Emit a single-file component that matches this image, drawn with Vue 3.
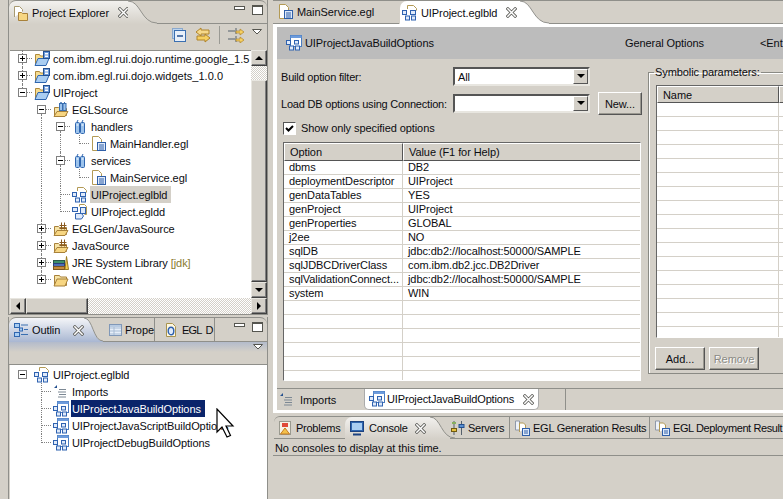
<script setup>
const tree = [
  { cells: ['plus up down'], icon: 'project', label: 'com.ibm.egl.rui.dojo.runtime.google_1.5', wide: true },
  { cells: ['plus up down'], icon: 'project', label: 'com.ibm.egl.rui.dojo.widgets_1.0.0', wide: true },
  { cells: ['minus up'], icon: 'project', label: 'UIProject' },
  { cells: ['', 'minus down'], icon: 'eglsource', label: 'EGLSource' },
  { cells: ['', 'v', 'minus down'], icon: 'pkg', label: 'handlers' },
  { cells: ['', 'v', 'v', 'elbow'], icon: 'egl', label: 'MainHandler.egl' },
  { cells: ['', 'v', 'minus up down'], icon: 'pkg', label: 'services' },
  { cells: ['', 'v', 'v', 'elbow'], icon: 'egl', label: 'MainService.egl' },
  { cells: ['', 'v', 'tee'], icon: 'bld', label: 'UIProject.eglbld', soft: true },
  { cells: ['', 'v', 'elbow'], icon: 'dd', label: 'UIProject.egldd' },
  { cells: ['', 'plus up down'], icon: 'srcfolder', label: 'EGLGen/JavaSource' },
  { cells: ['', 'plus up down'], icon: 'srcfolder', label: 'JavaSource' },
  { cells: ['', 'plus up down'], icon: 'jre', label: 'JRE System Library', note: '[jdk]' },
  { cells: ['', 'plus up'], icon: 'folder', label: 'WebContent' }
]

const outline = [
  { cells: ['minus'], icon: 'bld', label: 'UIProject.eglbld' },
  { cells: ['', 'tee'], icon: 'imports', label: 'Imports' },
  { cells: ['', 'tee'], icon: 'opt', label: 'UIProjectJavaBuildOptions', selected: true },
  { cells: ['', 'tee'], icon: 'opt', label: 'UIProjectJavaScriptBuildOptions' },
  { cells: ['', 'elbow'], icon: 'opt', label: 'UIProjectDebugBuildOptions' }
]

const options = [
  ['dbms', 'DB2'],
  ['deploymentDescriptor', 'UIProject'],
  ['genDataTables', 'YES'],
  ['genProject', 'UIProject'],
  ['genProperties', 'GLOBAL'],
  ['j2ee', 'NO'],
  ['sqlDB', 'jdbc:db2://localhost:50000/SAMPLE'],
  ['sqlJDBCDriverClass', 'com.ibm.db2.jcc.DB2Driver'],
  ['sqlValidationConnect...', 'jdbc:db2://localhost:50000/SAMPLE'],
  ['system', 'WIN'],
  ['', ''], ['', ''], ['', ''], ['', ''], ['', ''], ['', '']
]

const symbolRows = 17
const hasBox = c => c.includes('plus') || c.includes('minus')
</script>

<template>
  <div class="workbench">
    <!-- icon sprite -->
    <svg class="sprite" aria-hidden="true">
      <defs>
        <linearGradient id="greyFade" x1="0" y1="0" x2="0" y2="1">
          <stop offset="0" stop-color="#f2f1ee"/><stop offset="1" stop-color="#d4d0c8"/>
        </linearGradient>
        <linearGradient id="blueFade" x1="0" y1="0" x2="0" y2="1">
          <stop offset="0" stop-color="#f4f5f8"/><stop offset="1" stop-color="#a9b7d2"/>
        </linearGradient>
        <symbol id="i-project" viewBox="0 0 16 16">
          <path d="M1.500 3.500h4l1 1.500h4v8h-9z" fill="#f6dc90" stroke="#b08a3a"/>
          <path d="M1 14.500l3-7h11l-3 7z" fill="#a9cdf2" stroke="#2f66b0"/>
          <rect x="9.500" y="0.500" width="6" height="7" fill="#6d9bdc" stroke="#24508f"/>
          <rect x="11" y="2" width="3" height="1.500" fill="#fff"/>
          <rect x="11" y="4.500" width="3" height="1.500" fill="#fff"/>
        </symbol>
        <symbol id="i-eglsource" viewBox="0 0 16 16">
          <path d="M1.500 5.500h4l1 1h7v7h-12z" fill="#f6e3a6" stroke="#a8813a"/>
          <path d="M1 14.500l3-5h11l-3 5z" fill="#f7d682" stroke="#a8813a"/>
          <rect x="6.500" y="1.500" width="3" height="7" fill="#9cc3ec" stroke="#3a6fb0"/>
          <rect x="10" y="1.500" width="3" height="7" fill="#9cc3ec" stroke="#3a6fb0"/>
          <path d="M7 1l2 -1M11 1l1 -1" stroke="#3a6fb0"/>
        </symbol>
        <symbol id="i-srcfolder" viewBox="0 0 16 16">
          <path d="M1.500 5.500h4l1 1h7v7h-12z" fill="#f6e3a6" stroke="#a8813a"/>
          <path d="M1 14.500l3-5h11l-3 5z" fill="#f7d682" stroke="#a8813a"/>
          <path d="M8.500 1.500v7M11.500 1.500v7M6.500 4.500h7M6.500 7.500h7" stroke="#8a5a20" fill="none"/>
        </symbol>
        <symbol id="i-folder" viewBox="0 0 16 16">
          <path d="M1.500 3.500h5l1 1.500h6v8.500h-12z" fill="#f6e3a6" stroke="#a8813a"/>
          <path d="M1 14l3-7h11l-3 7z" fill="#f7d682" stroke="#a8813a"/>
        </symbol>
        <symbol id="i-pkg" viewBox="0 0 16 16">
          <rect x="3.500" y="3.500" width="4" height="11" rx="1" fill="#9cc3ec" stroke="#2f66b0"/>
          <rect x="8.500" y="3.500" width="4" height="11" rx="1" fill="#9cc3ec" stroke="#2f66b0"/>
          <path d="M4.500 6h2M9.500 6h2" stroke="#fff"/>
          <path d="M5 3l1 -2M10 3l1 -2" stroke="#2f66b0"/>
        </symbol>
        <symbol id="i-egl" viewBox="0 0 16 16">
          <path d="M6 14.500h-4.500v-14h6l3 3v3" fill="#fff" stroke="#b39a55"/>
          <rect x="6.500" y="6.500" width="8" height="8" fill="#dfeafa" stroke="#2f5fa8"/>
          <path d="M8 9h5M8 11h5M8 13h5" stroke="#2f5fa8"/>
        </symbol>
        <symbol id="i-bld" viewBox="0 0 16 16">
          <path d="M5.500 4v-3.500h6l3 3v2" fill="#fff" stroke="#b39a55"/>
          <rect x="0.500" y="5.500" width="4" height="4" fill="#dfeafa" stroke="#2f62b0"/>
          <rect x="8.500" y="5.500" width="5" height="4" fill="#dfeafa" stroke="#2f62b0"/>
          <rect x="3.500" y="11" width="4" height="4" fill="#dfeafa" stroke="#2f62b0"/>
          <rect x="9.500" y="11" width="4" height="4" fill="#dfeafa" stroke="#2f62b0"/>
        </symbol>
        <symbol id="i-dd" viewBox="0 0 16 16">
          <path d="M7.500 2.500v-2h5l2 2v8h-2" fill="#fff" stroke="#b39a55"/>
          <rect x="0.500" y="3.500" width="5" height="4" fill="#dfeafa" stroke="#2f62b0"/>
          <rect x="8.500" y="3.500" width="5" height="6" fill="#dfeafa" stroke="#2f62b0"/>
          <path d="M3.500 9.500h6l2 2.500-2 3h-6z" fill="#dfeafa" stroke="#2f62b0"/>
        </symbol>
        <symbol id="i-jre" viewBox="0 0 16 16">
          <rect x="0.500" y="5.500" width="11" height="3" fill="#3f8f6a" stroke="#2a5a48"/>
          <rect x="0.500" y="8.500" width="11" height="3" fill="#4f6fb8" stroke="#2a3f78"/>
          <rect x="0.500" y="11.500" width="11" height="3" fill="#c58a3a" stroke="#7a5520"/>
          <path d="M12 14.500l1.500-13 2 13z" fill="#f4cf50" stroke="#9a7a20"/>
        </symbol>
        <symbol id="i-opt" viewBox="0 0 16 16">
          <rect x="4.500" y="0.500" width="11" height="11" fill="#fff" stroke="#4a7cc0"/>
          <rect x="4.500" y="0.500" width="11" height="2.500" fill="#6d9bdc"/>
          <rect x="0.500" y="5.500" width="4" height="4" fill="#dfeafa" stroke="#2f62b0"/>
          <rect x="8.500" y="5.500" width="4" height="3.500" fill="#dfeafa" stroke="#2f62b0"/>
          <rect x="3.500" y="11" width="4" height="4" fill="#dfeafa" stroke="#2f62b0"/>
          <rect x="9.500" y="11" width="4" height="4" fill="#dfeafa" stroke="#2f62b0"/>
        </symbol>
        <symbol id="i-imports" viewBox="0 0 16 16">
          <path d="M1 4l3-3v3z" fill="#24508f"/>
          <path d="M6 5.500h7M5 8h8M6 10.500h7M5 13h8" stroke="#7c8894"/>
        </symbol>
        <symbol id="i-explorer" viewBox="0 0 16 16">
          <path d="M1.500 12v-10.500h5l3 3v2" fill="#fff" stroke="#a89a70"/>
          <path d="M5.500 7.500h3l1 1h5v7h-9z" fill="#f7d682" stroke="#a8813a"/>
        </symbol>
        <symbol id="i-outline" viewBox="0 0 16 16">
          <rect x="1.500" y="1.500" width="5" height="4" fill="#a9cdf2" stroke="#2f66b0"/>
          <rect x="1.500" y="10.500" width="5" height="4" fill="#a9cdf2" stroke="#2f66b0"/>
          <rect x="6.500" y="6" width="3" height="3" fill="#a9cdf2" stroke="#2f66b0"/>
          <path d="M8 3h7M11 7.500h4M8 12.500h7" stroke="#3a6fb0"/>
        </symbol>
        <symbol id="i-props" viewBox="0 0 16 16">
          <rect x="1.500" y="2.500" width="12" height="11" fill="#e6eef8" stroke="#8098b8"/>
          <path d="M2 6h11M2 9h11M2 12h11M6 3v10" stroke="#a8bcd4"/>
          <rect x="2" y="3" width="11" height="2" fill="#b8cbe2"/>
        </symbol>
        <symbol id="i-egld" viewBox="0 0 16 16">
          <path d="M3.500 14.500v-13h6l3 3v10z" fill="#fff8e0" stroke="#a8934e"/>
          <ellipse cx="8" cy="9" rx="2.800" ry="3.800" fill="#dfeafa" stroke="#2f62b0" stroke-width="1.400"/>
        </symbol>
        <symbol id="i-problems" viewBox="0 0 16 16">
          <rect x="2.500" y="1.500" width="11" height="13" fill="#f6f2e6" stroke="#9a9a90"/>
          <rect x="5" y="3" width="6" height="4" fill="#e04a3a"/>
          <path d="M3.500 14l4.500-6 4.500 6z" fill="#f3c04a" stroke="#c67a20"/>
        </symbol>
        <symbol id="i-console" viewBox="0 0 16 16">
          <rect x="1.500" y="1.500" width="13" height="10" fill="#2f66b0" stroke="#1c4280"/>
          <rect x="3" y="3" width="10" height="7" fill="#a9cdf2"/>
          <path d="M4 14.500h8" stroke="#1c4280" stroke-width="2"/>
        </symbol>
        <symbol id="i-servers" viewBox="0 0 16 16">
          <path d="M4 1v14M11.500 1v14" stroke="#55606c"/>
          <rect x="1.500" y="8.500" width="5" height="3" fill="#e6c040" stroke="#705a10"/>
          <rect x="9" y="4.500" width="5" height="3" fill="#5a8fd0" stroke="#24508f"/>
          <rect x="2" y="2" width="4" height="2" fill="#88b060"/>
        </symbol>
        <symbol id="i-results" viewBox="0 0 16 16">
          <path d="M1.500 10v-9h4v9z" fill="#eef2f8" stroke="#8f98a8"/>
          <path d="M5.500 12v-9h4l2 2v3" fill="#fff" stroke="#b39a55"/>
          <rect x="8.500" y="8.500" width="7" height="7" fill="#dfeafa" stroke="#2f5fa8"/>
          <path d="M10 11h4M10 13h4" stroke="#2f5fa8"/>
        </symbol>
        <symbol id="i-close" viewBox="0 0 12 12">
          <path d="M2 2l8 8M10 2l-8 8" stroke="#60605c" stroke-width="3.400" stroke-linecap="square" fill="none"/>
          <path d="M2 2l8 8M10 2l-8 8" stroke="#fff" stroke-width="1.600" stroke-linecap="square" fill="none"/>
        </symbol>
        <symbol id="i-menu" viewBox="0 0 10 6">
          <path d="M0.500 0.500h9l-4.500 4.500z" fill="#fff" stroke="#55554f"/>
        </symbol>
      </defs>
    </svg>

    <!-- left column -->
    <div class="left">
      <section class="view explorer">
        <div class="strip">
          <div class="tab on grey">
            <svg class="ic"><use href="#i-explorer"/></svg>
            <span>Project Explorer</span>
            <svg class="x"><use href="#i-close"/></svg>
          </div>
          <svg class="curve" viewBox="0 0 29 24" preserveAspectRatio="none">
            <path d="M0 0C13 0 13 23 29 23V24H0z" fill="url(#greyFade)"/>
            <path d="M0 0C13 0 13 23 29 23" fill="none" stroke="#8f8f8a"/>
          </svg>
          <div class="strip-fill">
            <i class="vb-min"></i>
            <i class="vb-max"></i>
          </div>
        </div>
        <div class="toolbar">
          <svg class="tool" viewBox="0 0 16 16">
            <rect x="1.500" y="1.500" width="10" height="10" fill="#bcd4ee" stroke="#8aa8cc"/>
            <rect x="3.500" y="3.500" width="11" height="11" fill="#e8f0fa" stroke="#3a6fb0"/>
            <path d="M6 9h6" stroke="#24508f" stroke-width="1.500"/>
          </svg>
          <svg class="tool" viewBox="0 0 16 16">
            <path d="M1 5l5-4v2h8v4H6v2z" fill="#f6d98a" stroke="#b0842a"/>
            <path d="M15 11l-5-4v2H2v4h8v2z" fill="#f6d060" stroke="#b0842a"/>
          </svg>
          <i class="tool-sep"></i>
          <svg class="tool" viewBox="0 0 16 16">
            <path d="M0 4h7M0 12h7M8 1v6M8 9v6" stroke="#55606c" fill="none"/>
            <path d="M8 4h4V2l4 3-4 3V6H8zM8 12h4v-2l4 3-4 3v-2H8z" fill="#f6d060" stroke="#b0842a" stroke-width="0.700"/>
          </svg>
          <svg class="menu"><use href="#i-menu"/></svg>
        </div>
        <div class="tree-frame">
          <div class="tree-v">
            <div class="tree">
              <div v-for="row in tree" :key="row.label" class="row">
                <span v-for="(c, i) in row.cells" :key="i" class="cell" :class="c">
                  <template v-if="hasBox(c)">
                    <b class="box" :class="c.includes('plus') ? 'p' : 'm'"></b>
                    <i class="stub"></i>
                  </template>
                </span>
                <svg class="ic"><use :href="'#i-' + row.icon"/></svg>
                <span class="name" :class="{ soft: row.soft, wide: row.wide }">{{ row.label }}<em v-if="row.note">{{ row.note }}</em></span>
              </div>
            </div>
            <div class="vbar">
              <div class="sb-btn up-b"><i></i></div>
              <div class="track small"></div>
              <div class="thumb"></div>
              <div class="sb-btn down-b"><i></i></div>
            </div>
          </div>
          <div class="hbar">
            <div class="sb-btn left-b"><i></i></div>
            <div class="thumb h"></div>
            <div class="track"></div>
            <div class="sb-btn right-b"><i></i></div>
          </div>
        </div>
      </section>

      <section class="view outline">
        <div class="strip tall">
          <div class="tab on blue">
            <svg class="ic"><use href="#i-outline"/></svg>
            <span>Outlin</span>
            <svg class="x wide"><use href="#i-close"/></svg>
          </div>
          <svg class="curve small" viewBox="0 0 19 25" preserveAspectRatio="none">
            <path d="M0 0C9 0 9 24 19 24V25H0z" fill="url(#blueFade)"/>
            <path d="M0 0C9 0 9 24 19 24" fill="none" stroke="#8f8f8a"/>
          </svg>
          <div class="tab off prope">
            <svg class="ic"><use href="#i-props"/></svg>
            <span>Prope</span>
          </div>
          <div class="tab off egld">
            <svg class="ic"><use href="#i-egld"/></svg>
            <span>EGL D</span>
          </div>
          <div class="strip-fill">
            <i class="vb-min"></i>
            <i class="vb-max"></i>
          </div>
        </div>
        <div class="toolbar short">
          <svg class="menu"><use href="#i-menu"/></svg>
        </div>
        <div class="tree outline-tree">
          <div v-for="row in outline" :key="row.label" class="row">
            <span v-for="(c, i) in row.cells" :key="i" class="cell" :class="c">
              <b v-if="c === 'minus'" class="box m"></b>
            </span>
            <svg class="ic"><use :href="'#i-' + row.icon"/></svg>
            <span class="name" :class="{ sel: row.selected }">{{ row.label }}</span>
          </div>
        </div>
      </section>
    </div>

    <!-- right column -->
    <div class="right">
      <section class="editor">
        <div class="strip">
          <div class="tab off main-tab">
            <svg class="ic"><use href="#i-egl"/></svg>
            <span>MainService.egl</span>
          </div>
          <div class="tab on white">
            <svg class="ic"><use href="#i-bld"/></svg>
            <span>UIProject.eglbld</span>
            <svg class="x"><use href="#i-close"/></svg>
          </div>
          <svg class="curve" viewBox="0 0 30 24" preserveAspectRatio="none">
            <path d="M0 0C13 0 13 23 30 23V24H0z" fill="#fff"/>
            <path d="M0 0C13 0 13 23 30 23" fill="none" stroke="#8f8f8a"/>
          </svg>
          <div class="strip-fill"></div>
        </div>
        <div class="editor-body">
          <div class="form-head">
            <svg class="ic"><use href="#i-opt"/></svg>
            <span class="form-title">UIProjectJavaBuildOptions</span>
            <span class="form-sub">General Options</span>
            <span class="form-ent">&lt;Ent</span>
          </div>
          <div class="form">
            <div class="form-left">
              <div class="field">
                <label>Build option filter:</label>
                <div class="combo"><span>All</span><i class="combo-btn"></i></div>
              </div>
              <div class="field second">
                <label>Load DB options using Connection:</label>
                <div class="combo"><span></span><i class="combo-btn"></i></div>
                <button class="btn new">New...</button>
              </div>
              <div class="check-row">
                <span class="check">
                  <svg viewBox="0 0 11 11"><path d="M2 5l2.500 2.500L9 3" fill="none" stroke="#000" stroke-width="2"/></svg>
                </span>
                <span>Show only specified options</span>
              </div>
              <div class="table opts">
                <div class="thead">
                  <span class="th c1">Option</span>
                  <span class="th c2">Value (F1 for Help)</span>
                </div>
                <div class="tbody">
                  <div v-for="(o, i) in options" :key="i" class="tr">
                    <span class="td c1">{{ o[0] }}</span>
                    <span class="td c2">{{ o[1] }}</span>
                  </div>
                </div>
              </div>
            </div>
            <fieldset class="group">
              <legend>Symbolic parameters:</legend>
              <div class="table syms">
                <div class="thead">
                  <span class="th s1">Name</span>
                  <span class="th s2"></span>
                </div>
                <div class="tbody">
                  <div v-for="n in symbolRows" :key="n" class="tr">
                    <span class="td s1"></span>
                    <span class="td s2"></span>
                  </div>
                </div>
              </div>
              <div class="group-btns">
                <button class="btn">Add...</button>
                <button class="btn disabled">Remove</button>
              </div>
            </fieldset>
          </div>
          <div class="page-tabs">
            <div class="ptab">
              <svg class="ic"><use href="#i-imports"/></svg>
              <span>Imports</span>
            </div>
            <div class="ptab on">
              <svg class="ic"><use href="#i-opt"/></svg>
              <span>UIProjectJavaBuildOptions</span>
              <svg class="x"><use href="#i-close"/></svg>
            </div>
            <div class="ptab-end"></div>
          </div>
        </div>
      </section>

      <section class="console">
        <div class="strip low">
          <div class="tab off problems">
            <svg class="ic"><use href="#i-problems"/></svg>
            <span>Problems</span>
          </div>
          <div class="tab on grey">
            <svg class="ic"><use href="#i-console"/></svg>
            <span>Console</span>
            <svg class="x"><use href="#i-close"/></svg>
          </div>
          <svg class="curve" viewBox="0 0 25 22" preserveAspectRatio="none">
            <path d="M0 0C11 0 11 21 25 21V22H0z" fill="url(#greyFade)"/>
            <path d="M0 0C11 0 11 21 25 21" fill="none" stroke="#8f8f8a"/>
          </svg>
          <div class="tab off servers">
            <svg class="ic"><use href="#i-servers"/></svg>
            <span>Servers</span>
          </div>
          <div class="tab off results">
            <svg class="ic"><use href="#i-results"/></svg>
            <span>EGL Generation Results</span>
          </div>
          <div class="tab off results last">
            <svg class="ic"><use href="#i-results"/></svg>
            <span>EGL Deployment Result</span>
          </div>
        </div>
        <div class="console-text">No consoles to display at this time.</div>
      </section>
    </div>

    <!-- mouse pointer -->
    <svg class="cursor" viewBox="0 0 19 31">
      <path d="M1 1v23l5-5 5 10 3.500-1.500L10 18h7z" fill="#fff" stroke="#000" stroke-width="1.200"/>
    </svg>
  </div>
</template>

<style>
html, body { margin: 0; background: #d4d0c8; }
</style>

<style scoped>
.workbench {
  position: relative;
  width: 783px;
  height: 499px;
  overflow: hidden;
  display: flex;
  background: #d4d0c8;
  color: #0c0c10;
  font: 11px/14px "Liberation Sans", Arial, sans-serif;
  letter-spacing: -0.08px;
}
.sprite { width: 0; height: 0; position: absolute; }
.ic { width: 16px; height: 16px; flex: none; }
.x { width: 11px; height: 11px; flex: none; margin-left: 6px; }
.x.wide { margin-left: 10px; }

/* ── Columns ── */
.left {
  width: 273px;
  flex: none;
  box-sizing: border-box;
  padding-left: 8px;
  padding-right: 5px;
  display: flex;
  flex-direction: column;
  gap: 2px;
}
.right {
  flex: 1;
  min-width: 0;
  display: flex;
  flex-direction: column;
}

/* ── Views ── */
.view {
  border-left: 1px solid #8f8f8a;
  border-right: 1px solid #8f8f8a;
  display: flex;
  flex-direction: column;
  min-height: 0;
}
.explorer { height: 314px; border-bottom: 1px solid #8f8f8a; flex: none; }
.outline { flex: 1; }

.strip {
  height: 24px;
  flex: none;
  display: flex;
  align-items: stretch;
  background: #d4d0c8;
  border-top: 1px solid #8f8f8a;
  box-sizing: border-box;
  border-top-left-radius: 7px;
  border-top-right-radius: 7px;
  overflow: hidden;
}
.strip.tall { height: 25px; }
.strip.low { height: 23px; letter-spacing: -0.25px; }
.strip-fill {
  flex: 1;
  min-width: 0;
  border-bottom: 1px solid #8f8f8a;
  display: flex;
  justify-content: flex-end;
  align-items: flex-start;
  gap: 7px;
  padding: 4px 4px 0 0;
}
.vb-min {
  width: 11px;
  height: 4px;
  box-sizing: border-box;
  background: #fff;
  border: 1px solid #55554f;
  flex: none;
  margin-top: 1px;
}
.vb-max {
  width: 11px;
  height: 10px;
  box-sizing: border-box;
  background: #fff;
  border: 1px solid #55554f;
  border-top-width: 2px;
  flex: none;
}

.tab {
  display: flex;
  align-items: center;
  gap: 3px;
  padding: 0 0 0 4px;
  flex: none;
  white-space: nowrap;
}
.tab.on { border-top-left-radius: 7px; }
.tab.grey { background: linear-gradient(#f2f1ee, #d4d0c8); }
.tab.blue { background: linear-gradient(#f4f5f8, #a9b7d2); }
.tab.white { background: #fff; }
.tab.off { border-bottom: 1px solid #8f8f8a; }
.curve { width: 29px; flex: none; display: block; }
.curve.small { width: 19px; }

.explorer .tab { width: 119px; box-sizing: border-box; }
.outline .tab.blue { width: 75px; box-sizing: border-box; }
.outline .prope { width: 52px; box-sizing: border-box; padding-left: 5px; gap: 1px; border-right: 1px solid #8f8f8a; }
.outline .egld { width: 60px; box-sizing: border-box; padding-left: 8px; letter-spacing: -0.8px; word-spacing: 2px; border-right: 1px solid #8f8f8a; }

.toolbar {
  height: 26px;
  flex: none;
  box-sizing: border-box;
  display: flex;
  align-items: center;
  justify-content: flex-end;
  gap: 8px;
  padding: 0 5px 4px 0;
}
.toolbar.short {
  height: 23px;
  background: linear-gradient(#b3bbcb, #d4d0c8 10px);
  border-bottom: 1px solid #8f8f8a;
  padding-bottom: 6px;
  padding-right: 4px;
}
.tool { width: 16px; height: 16px; flex: none; }
.tool-sep { width: 1px; height: 18px; background: #9a9a94; }
.menu { width: 10px; height: 6px; margin-bottom: 6px; }

/* ── Trees ── */
.tree-frame {
  flex: 1;
  min-height: 0;
  margin-left: 1px;
  display: flex;
  flex-direction: column;
}
.tree-v { flex: 1; min-height: 0; display: flex; }
.tree {
  flex: 1;
  min-width: 0;
  background: #fff;
  overflow: hidden;
  padding: 0 0 0 3px;
  box-shadow: inset 0 1px 0 #8f8f8a;
}
.outline-tree { flex: 1; margin-left: 1px; padding-top: 1px; box-shadow: none; }
.row {
  height: 17px;
  display: flex;
  align-items: center;
  white-space: nowrap;
}
.row .ic { margin-left: 2px; }
.name { margin-left: 2px; padding: 2px 4px 0 1px; line-height: 15px; }
.name.wide { letter-spacing: 0.02px; }
.name em { font-style: normal; color: #8a7a30; margin-left: 3px; }
.name.soft { background: #d4d0c8; }
.name.sel { background: #0a246a; color: #fff; }

.cell {
  width: 19px;
  height: 17px;
  flex: none;
  position: relative;
  display: block;
}
/* dotted guides */
.cell.v::before,
.cell.tee::before,
.cell.elbow::before,
.cell.up::before,
.cell.down::after {
  content: '';
  position: absolute;
  left: 9px;
  border-left: 1px dotted #808080;
}
.cell.v::before, .cell.tee::before { top: 0; bottom: 0; }
.cell.elbow::before { top: 0; height: 9px; }
.cell.up::before { top: 0; height: 4px; }
.cell.down::after { top: 13px; bottom: 0; }
.cell.tee::after,
.cell.elbow::after {
  content: '';
  position: absolute;
  left: 9px;
  top: 8px;
  width: 10px;
  border-top: 1px dotted #808080;
}
.stub {
  position: absolute;
  left: 14px;
  top: 8px;
  width: 5px;
  border-top: 1px dotted #808080;
}
.box {
  position: absolute;
  left: 5px;
  top: 4px;
  width: 9px;
  height: 9px;
  box-sizing: border-box;
  border: 1px solid #808080;
  background: #fff;
}
.box::before {
  content: '';
  position: absolute;
  left: 1px;
  top: 3px;
  width: 5px;
  height: 1px;
  background: #000;
}
.box.p::after {
  content: '';
  position: absolute;
  left: 3px;
  top: 1px;
  width: 1px;
  height: 5px;
  background: #000;
}

/* ── Scrollbars ── */
.vbar {
  width: 16px;
  flex: none;
  display: flex;
  flex-direction: column;
}
.hbar {
  height: 16px;
  flex: none;
  display: flex;
}
.sb-btn, .thumb {
  background: #d4d0c8;
  box-sizing: border-box;
  border: 1px solid;
  border-color: #e8e6e0 #404040 #404040 #e8e6e0;
  box-shadow: inset -1px -1px 0 #808080;
}
.sb-btn {
  width: 16px;
  height: 16px;
  flex: none;
  display: flex;
  align-items: center;
  justify-content: center;
}
.sb-btn i { width: 0; height: 0; border: 4px solid transparent; }
.sb-btn.up-b i { border-bottom-color: #000; margin-top: -4px; }
.sb-btn.down-b i { border-top-color: #000; margin-top: 4px; }
.sb-btn.left-b i { border-right-color: #000; margin-left: -4px; }
.sb-btn.right-b i { border-left-color: #000; margin-left: 4px; }
.thumb { flex: 1; }
.thumb.h { flex: none; width: 62px; }
.track {
  flex: 1;
  background-color: #fff;
  background-image: conic-gradient(#d4d0c8 25%, #fff 0 50%, #d4d0c8 0 75%, #fff 0);
  background-size: 2px 2px;
}
.track.small { flex: none; height: 14px; }

/* ── Editor ── */
.editor { flex: none; height: 413px; display: flex; flex-direction: column; }
.main-tab { width: 126px; box-sizing: border-box; padding-left: 5px; }
.editor .tab.white {
  width: 120px;
  box-sizing: border-box;
  padding-left: 2px;
  margin-left: 1px;
}
.editor .strip { height: 24px; border-radius: 0; }
.editor-body {
  flex: 1;
  min-height: 0;
  display: flex;
  flex-direction: column;
  border: 3px solid #fff;
  border-right: 0;
  border-left-width: 4px;
}
.form-head {
  height: 32px;
  flex: none;
  background: #bcbcbc;
  display: flex;
  align-items: center;
  padding-left: 9px;
  white-space: nowrap;
}
.form-title { margin-left: 3px; width: 320px; flex: none; }
.form-sub { width: 135px; flex: none; }
.form {
  flex: 1;
  min-height: 0;
  background: #d4d0c8;
  display: flex;
  padding: 8px 0 0 4px;
  gap: 7px;
}
.form-left { width: 360px; flex: none; display: flex; flex-direction: column; }
.field { display: flex; align-items: center; height: 19px; }
.field.second { margin-top: 8px; }
.field label { width: 172px; flex: none; white-space: nowrap; letter-spacing: -0.2px; }
.combo {
  width: 137px;
  height: 19px;
  box-sizing: border-box;
  flex: none;
  display: flex;
  align-items: center;
  justify-content: space-between;
  padding-left: 3px;
  background: #fff;
  border: 2px solid;
  border-color: #555 #e8e6e0 #e8e6e0 #555;
}
.combo-btn {
  width: 15px;
  height: 15px;
  background: #d4d0c8;
  box-sizing: border-box;
  border: 1px solid;
  border-color: #fff #555 #555 #fff;
  position: relative;
}
.combo-btn::after {
  content: '';
  position: absolute;
  left: 3px;
  top: 4px;
  border: 4px solid transparent;
  border-top-color: #000;
}
.btn {
  font: inherit;
  color: inherit;
  letter-spacing: inherit;
  background: #d4d0c8;
  border: 1px solid;
  border-color: #fff #555 #555 #fff;
  box-shadow: inset -1px -1px 0 #9a9890;
  padding: 0;
}
.btn.new { width: 44px; height: 23px; margin-left: 8px; flex: none; }
.btn.disabled { color: #8a8a84; text-shadow: 1px 1px 0 #fff; }
.check-row {
  display: flex;
  align-items: center;
  gap: 5px;
  height: 14px;
  margin-top: 8px;
  padding-left: 2px;
}
.check {
  width: 13px;
  height: 13px;
  box-sizing: border-box;
  background: #fff;
  border: 1px solid;
  border-color: #555 #fff #fff #555;
  display: block;
}
.check svg { display: block; width: 11px; height: 11px; }

.table {
  border: 1px solid;
  border-color: #666 #fff #fff #666;
  background: #fff;
  overflow: hidden;
}
.opts {
  margin-top: 7px;
  margin-left: 2px;
  width: 358px;
  height: 239px;
  box-sizing: border-box;
  flex: none;
}
.thead { display: flex; height: 18px; background: #d4d0c8; }
.th {
  box-sizing: border-box;
  border: 1px solid;
  border-color: #fff #555 #555 #fff;
  padding: 1px 0 0 5px;
  flex: none;
}
.c1 { width: 119px; }
.c2 { width: 238px; }
.tbody { background: #fff; }
.tr { display: flex; height: 14px; }
.td {
  box-sizing: border-box;
  border-bottom: 1px solid #d4d0c8;
  border-right: 1px solid #d4d0c8;
  padding-left: 5px;
  line-height: 13px;
  flex: none;
  white-space: nowrap;
}

.group {
  margin: 0;
  padding: 7px 0 0 7px;
  width: 200px;
  flex: none;
  box-sizing: border-box;
  border: 1px solid #8a8a84;
  box-shadow: inset 1px 1px 0 #fff;
  min-width: 0;
  height: 308px;
  margin-top: -1px;
}
.group legend { padding: 0 1px; margin-left: -2px; line-height: 12px; }
.syms { height: 253px; box-sizing: border-box; width: 190px; }
.syms .thead { height: 17px; }
.s1 { width: 122px; }
.s2 { width: 60px; }
.group-btns { display: flex; gap: 4px; margin-top: 9px; margin-left: -1px; }
.group-btns .btn { width: 50px; height: 23px; }

.page-tabs {
  height: 22px;
  flex: none;
  box-sizing: border-box;
  display: flex;
  background: #d4d0c8;
  border-top: 1px solid #8f8f8a;
}
.ptab {
  width: 87px;
  box-sizing: border-box;
  display: flex;
  align-items: center;
  gap: 5px;
  padding-left: 2px;
  white-space: nowrap;
}
.ptab.on {
  width: 175px;
  background: #fff;
  padding-left: 4px;
  gap: 2px;
  letter-spacing: -0.15px;
  border-bottom-left-radius: 5px;
  border-bottom-right-radius: 5px;
  border: 1px solid #aaa;
  border-top: 0;
}
.ptab.on .x { margin-left: 7px; }
.ptab-end {
  width: 26px;
  border-right: 1px solid #8f8f8a;
}

/* ── Console ── */
.console { flex: 1; margin-top: 3px; min-height: 0; }
.strip.low { border-top-left-radius: 6px; border-top-right-radius: 0; margin-left: 1px; }
.problems { width: 71px; box-sizing: border-box; padding-left: 3px; }
.console .tab.grey { width: 85px; box-sizing: border-box; padding-left: 4px; gap: 4px; }
.console .tab.grey .x { margin-left: 3px; }
.console .curve { width: 25px; }
.console .tab.off.servers {
  width: 60px;
  box-sizing: border-box;
  margin-left: -5px;
  padding-left: 0;
  gap: 2px;
  border-right: 1px solid #8f8f8a;
  position: relative;
}
.results { width: 140px; box-sizing: border-box; border-right: 1px solid #8f8f8a; padding-left: 4px; }
.results.last { width: 133px; border-right: 0; letter-spacing: -0.4px; }
.console-text {
  height: 17px;
  padding: 2px 0 0 2px;
  box-sizing: border-box;
  border-bottom: 1px solid #8f8f8a;
}

.cursor {
  position: absolute;
  left: 216px;
  top: 408px;
  width: 19px;
  height: 31px;
}
</style>
